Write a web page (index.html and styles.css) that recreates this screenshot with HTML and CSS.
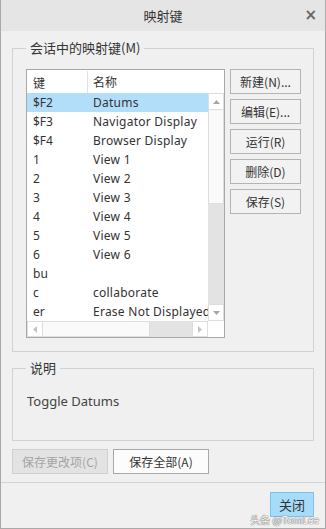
FILE: index.html
```html
<!DOCTYPE html>
<html lang="zh">
<head>
<meta charset="utf-8">
<link rel="stylesheet" href="styles.css">
</head>
<body>
<div class="window">
  <div class="titlebar">
    <span class="title">映射键</span>
    <span class="close">×</span>
  </div>
  <div class="content">
    <fieldset class="group group-keys">
      <legend>会话中的映射键(M)</legend>
      <div class="keys-body">
        <div class="listbox">
          <div class="list-head">
            <div class="col1">键</div>
            <div class="col2">名称</div>
          </div>
          <div class="list-main">
            <div class="rows">
              <div class="row selected"><div class="col1">$F2</div><div class="col2">Datums</div></div>
              <div class="row"><div class="col1">$F3</div><div class="col2">Navigator Display</div></div>
              <div class="row"><div class="col1">$F4</div><div class="col2">Browser Display</div></div>
              <div class="row"><div class="col1">1</div><div class="col2">View 1</div></div>
              <div class="row"><div class="col1">2</div><div class="col2">View 2</div></div>
              <div class="row"><div class="col1">3</div><div class="col2">View 3</div></div>
              <div class="row"><div class="col1">4</div><div class="col2">View 4</div></div>
              <div class="row"><div class="col1">5</div><div class="col2">View 5</div></div>
              <div class="row"><div class="col1">6</div><div class="col2">View 6</div></div>
              <div class="row"><div class="col1">bu</div><div class="col2"></div></div>
              <div class="row"><div class="col1">c</div><div class="col2">collaborate</div></div>
              <div class="row"><div class="col1">er</div><div class="col2">Erase Not Displayed</div></div>
            </div>
            <div class="vscroll">
              <div class="sb-btn"><svg width="7" height="4" viewBox="0 0 7 4"><path d="M0 4 L3.5 0 L7 4 Z" fill="#a6a6a6"/></svg></div>
              <div class="vthumb"></div>
              <div class="vtrack"></div>
              <div class="sb-btn"><svg width="7" height="4" viewBox="0 0 7 4"><path d="M0 0 L7 0 L3.5 4 Z" fill="#a6a6a6"/></svg></div>
            </div>
          </div>
          <div class="list-foot">
            <div class="hscroll">
              <div class="sb-btn h"><svg width="4" height="7" viewBox="0 0 4 7"><path d="M4 0 L4 7 L0 3.5 Z" fill="#c4c4c4"/></svg></div>
              <div class="hthumb"></div>
              <div class="htrack"></div>
              <div class="sb-btn h"><svg width="4" height="7" viewBox="0 0 4 7"><path d="M0 0 L4 3.5 L0 7 Z" fill="#c4c4c4"/></svg></div>
            </div>
            <div class="corner"></div>
          </div>
        </div>
        <div class="side-buttons">
          <button class="btn">新建(N)...</button>
          <button class="btn">编辑(E)...</button>
          <button class="btn">运行(R)</button>
          <button class="btn">删除(D)</button>
          <button class="btn">保存(S)</button>
        </div>
      </div>
    </fieldset>
    <fieldset class="group group-desc">
      <legend>说明</legend>
      <div class="desc">Toggle Datums</div>
    </fieldset>
    <div class="save-row">
      <button class="btn wide disabled">保存更改项(C)</button>
      <button class="btn wide light">保存全部(A)</button>
    </div>
  </div>
  <div class="footer">
    <button class="btn close-btn">关闭</button>
  </div>
  <div class="watermark">头条 @TomLee</div>
</div>
</body>
</html>
```
FILE: styles.css
```css
* { box-sizing: border-box; }
html, body { margin: 0; padding: 0; }
body {
  width: 326px;
  height: 529px;
  font-family: "Noto Sans", "Noto Sans CJK SC", sans-serif;
  font-size: 12px;
  color: #333;
  background: #f0f0f0;
}
.window {
  position: relative;
  width: 326px;
  height: 529px;
  background: #f0f0f0;
  border: 1px solid #a9a9a9;
  border-top: none;
  display: flex;
  flex-direction: column;
}
.titlebar {
  height: 31px;
  background: #e5e5e5;
  display: flex;
  align-items: center;
  justify-content: center;
  position: relative;
  flex: none;
}
.title {
  font-family: "Noto Sans CJK SC", sans-serif;
  font-size: 13px;
  color: #333;
  line-height: 16px;
}
.close {
  position: absolute;
  right: 8px;
  top: 7px;
  font-family: "DejaVu Sans", sans-serif;
  font-size: 15px;
  font-weight: bold;
  line-height: 16px;
  color: #666;
}
.content {
  padding: 9px 11px 0 11px;
  flex: none;
}
.group {
  margin: 0;
  border: 1px solid #d2d2d2;
  min-width: 0;
}
.group legend {
  font-family: "Noto Sans CJK SC", sans-serif;
  font-size: 13px;
  line-height: 16px;
  padding: 0 4px;
  margin-left: 0;
  color: #333;
}
.group-keys {
  padding: 13px 12px 13px 13px;
}
.keys-body {
  display: flex;
  gap: 5px;
  align-items: flex-start;
}
.listbox {
  width: 199px;
  height: 269px;
  border: 1px solid #a8a8a8;
  background: #fff;
  display: flex;
  flex-direction: column;
  overflow: hidden;
}
.list-head {
  height: 23px;
  display: flex;
  flex: none;
}
.list-head .col1 {
  border-right: 1px solid #e3e3e3;
  margin-top: 1px;
}
.col1 {
  width: 61px;
  padding-left: 6px;
  white-space: nowrap;
  display: flex;
  align-items: center;
  flex: none;
}
.col2 {
  padding-left: 5px;
  white-space: nowrap;
  display: flex;
  align-items: center;
}
.row .col2 { letter-spacing: 0.25px; }
.list-head .col1, .list-head .col2 {
  font-family: "Noto Sans CJK SC", sans-serif;
  font-size: 12px;
}
.list-main {
  height: 228px;
  display: flex;
  flex: none;
}
.rows {
  width: 181px;
  overflow: hidden;
  flex: none;
}
.row {
  height: 19px;
  display: flex;
  line-height: 19px;
}
.row.selected { background: #b3defa; }
.vscroll {
  width: 16px;
  display: flex;
  flex-direction: column;
  background: #e6e6e6;
  flex: none;
}
.sb-btn {
  height: 17px;
  background: #fff;
  border: 1px solid #dedede;
  display: flex;
  align-items: center;
  justify-content: center;
  flex: none;
}
.vthumb {
  height: 94px;
  background: #fafafa;
  border: 1px solid #dedede;
  border-top: none;
  flex: none;
}
.vtrack { flex: 1; background: #e3e3e3; }
.list-foot {
  height: 16px;
  display: flex;
  flex: none;
}
.hscroll {
  width: 181px;
  display: flex;
  background: #e3e3e3;
  flex: none;
}
.sb-btn.h {
  height: 16px;
  width: 16px;
}
.hthumb {
  width: 107px;
  background: #fafafa;
  border: 1px solid #dedede;
  border-left: none;
  flex: none;
}
.htrack { flex: 1; }
.corner { flex: 1; background: #fff; }
.side-buttons {
  display: flex;
  flex-direction: column;
  gap: 5px;
}
.btn {
  font-family: "Noto Sans CJK SC", "Noto Sans", sans-serif;
  font-size: 12px;
  color: #333;
  background: #f2f2f2;
  border: 1px solid #b4b4b4;
  padding: 0;
  margin: 0;
  height: 25px;
  width: 71px;
  line-height: 22px;
}
.group-desc {
  margin-top: 8px;
  padding: 17px 12px 31px 14px;
}
.group-desc legend { margin-left: -1px; }
.desc {
  line-height: 16px;
  font-size: 13px;
  color: #444;
}
.save-row {
  margin-top: 8px;
  display: flex;
  gap: 5px;
}
.btn.wide { width: 96px; }
.btn.disabled {
  background: #e3e3e3;
  border-color: #cfcfcf;
  color: #a3a3a3;
}
.btn.light { background: #fcfcfc; border-color: #a9a9a9; }
.footer {
  margin-top: 8px;
  border-top: 1px solid #d4d4d4;
  padding: 9px 11px 0 0;
  display: flex;
  justify-content: flex-end;
}
.btn.close-btn {
  width: 44px;
  background: #a6dcfa;
  border-color: #7fbfe8;
  font-size: 13px;
}
.watermark {
  position: absolute;
  right: 6px;
  bottom: 2px;
  font-family: "Noto Sans CJK SC", sans-serif;
  font-size: 10px;
  line-height: 12px;
  color: #fff;
  text-shadow: 0 0 1px #555, 0 0 1px #555;
}
```
